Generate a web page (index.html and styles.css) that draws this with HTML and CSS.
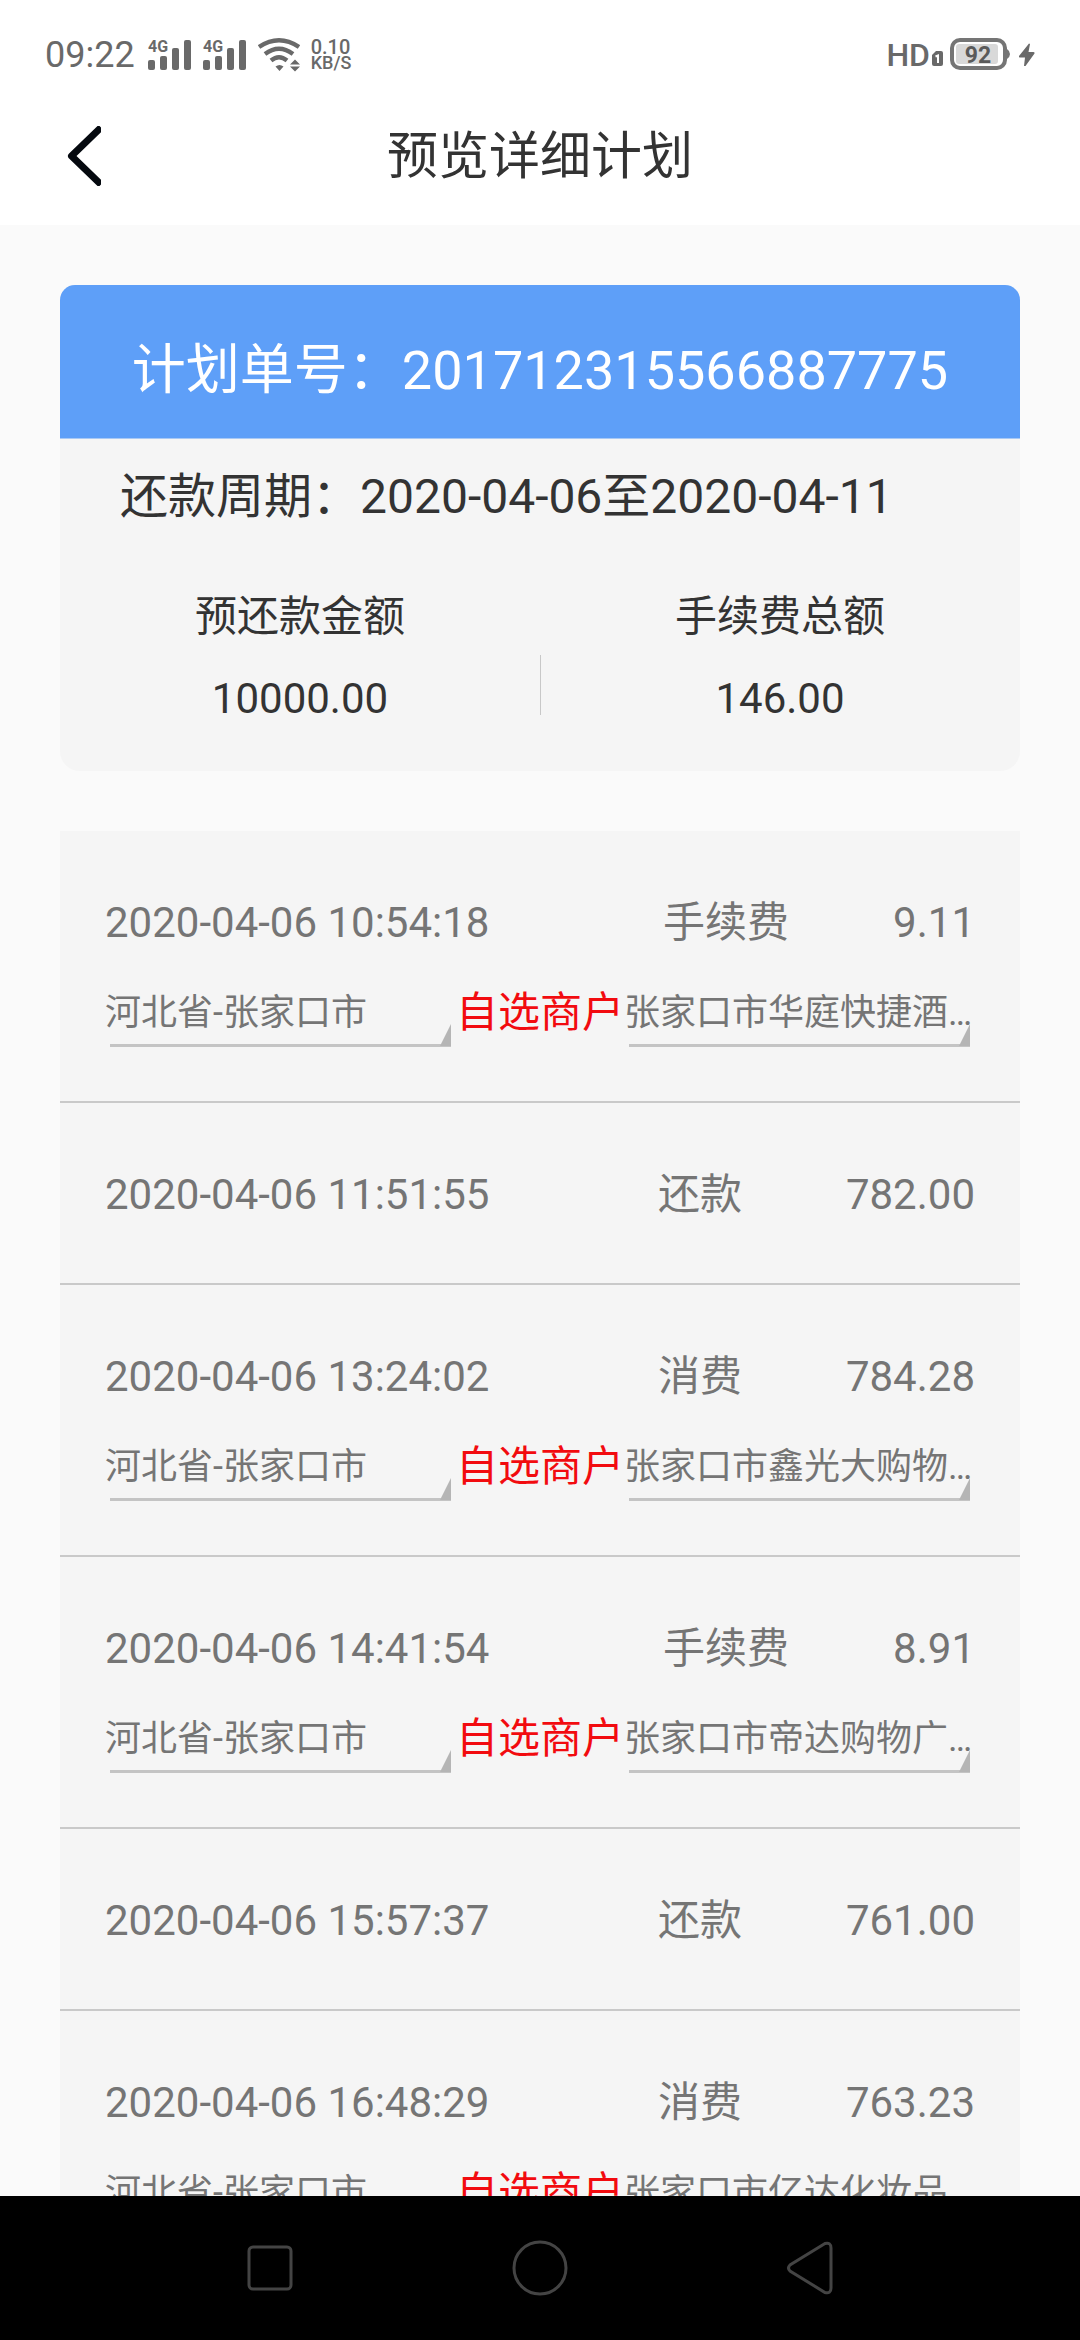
FILE: index.html
```html
<!DOCTYPE html>
<html lang="zh-CN">
<head>
<meta charset="utf-8">
<meta name="viewport" content="width=device-width, initial-scale=1">
<title>预览详细计划</title>
<link rel="stylesheet" href="styles.css">
</head>
<body>
<div class="statusbar">
  <div class="status-group">
    <span class="clock">09:22</span>
    <svg class="signal" width="44" height="32" viewBox="0 0 44 32" aria-hidden="true">
      <text class="signal-label" x="0" y="13">4G</text>
      <rect x="0" y="21" width="7" height="10" rx="2"/><rect x="12" y="17" width="7" height="14" rx="2"/><rect x="24" y="9" width="7" height="22" rx="2"/><rect x="36" y="1" width="7" height="30" rx="2"/>
    </svg>
    <svg class="signal" width="44" height="32" viewBox="0 0 44 32" aria-hidden="true">
      <text class="signal-label" x="0" y="13">4G</text>
      <rect x="0" y="21" width="7" height="10" rx="2"/><rect x="12" y="17" width="7" height="14" rx="2"/><rect x="24" y="9" width="7" height="22" rx="2"/><rect x="36" y="1" width="7" height="30" rx="2"/>
    </svg>
    <svg class="wifi" width="42" height="34" viewBox="0 0 42 34" aria-hidden="true">
      <g fill="none" stroke="currentColor" stroke-width="4.4">
        <path d="M1 9Q21 -4.500 41 9"/>
        <path d="M7 16Q21 5.500 35 16"/>
        <path d="M13 22.500Q21 16 29 22.500"/>
      </g>
      <path fill="currentColor" d="M17.500 28.500Q21.500 25.500 25.500 28.500L21.500 33zM32 26.500L37 21.500L42 26.500zM32 28.500H42L37 33.500z"/>
    </svg>
    <span class="speed"><span class="speed-value">0.10</span><span class="speed-unit">KB/S</span></span>
  </div>
  <div class="status-group">
    <span class="hd">HD</span>
    <svg class="sim" width="12" height="16" viewBox="0 0 12 16" aria-hidden="true">
      <path fill="currentColor" d="M4 0H9Q11 0 11 2V13Q11 15 9 15H2Q0 15 0 13V4z"/>
      <path fill="none" stroke="#fff" stroke-width="2" d="M3.500 5.500L6 4.500V12"/>
    </svg>
    <svg class="battery" width="61" height="34" viewBox="0 0 61 34" role="img" aria-label="92%">
      <rect x="2" y="2" width="53" height="28" rx="8" fill="none" stroke="#757575" stroke-width="4"/>
      <rect x="6" y="6" width="42" height="20" rx="3" fill="#d9d9d9"/>
      <path fill="#757575" d="M57 11Q60 13 60 16T57 21z"/>
      <text class="battery-label" x="28" y="25" text-anchor="middle">92</text>
    </svg>
    <svg class="bolt" width="18" height="24" viewBox="0 0 18 24" aria-hidden="true"><path fill="currentColor" d="M11 0.500L1 13Q0.500 14.500 2 14.500H7L6 23L7.500 23L16.500 10.500Q17 9 15.500 9H10.500L12 1z"/></svg>
  </div>
</div>
<header class="titlebar">
  <button class="back" type="button" aria-label="返回">
    <svg width="34" height="60" viewBox="0 0 34 60" aria-hidden="true"><path d="M34 1.500L4.500 30L34 58.500" fill="none" stroke="#05090f" stroke-width="7" stroke-linejoin="round"/></svg>
  </button>
  <h1 class="title">预览详细计划</h1>
</header>
<main class="content">
  <section class="summary">
    <h2 class="plan-no">计划单号：201712315566887775</h2>
    <p class="period">还款周期：2020-04-06至2020-04-11</p>
    <dl class="totals">
      <div class="total"><dt>预还款金额</dt><dd>10000.00</dd></div>
      <div class="total"><dt>手续费总额</dt><dd>146.00</dd></div>
    </dl>
  </section>
  <ul class="records">
    <li class="record">
      <div class="record-head"><time class="time">2020-04-06 10:54:18</time><span>手续费</span><span>9.11</span></div>
      <div class="record-shop">
        <span class="picker"><select aria-label="地区"><option>河北省-张家口市</option></select></span>
        <label class="shop-label" for="shop1">自选商户</label>
        <span class="picker"><select id="shop1"><option>张家口市华庭快捷酒店</option></select></span>
      </div>
    </li>
    <li class="record">
      <div class="record-head"><time class="time">2020-04-06 11:51:55</time><span>还款</span><span>782.00</span></div>
    </li>
    <li class="record">
      <div class="record-head"><time class="time">2020-04-06 13:24:02</time><span>消费</span><span>784.28</span></div>
      <div class="record-shop">
        <span class="picker"><select aria-label="地区"><option>河北省-张家口市</option></select></span>
        <label class="shop-label" for="shop2">自选商户</label>
        <span class="picker"><select id="shop2"><option>张家口市鑫光大购物中心</option></select></span>
      </div>
    </li>
    <li class="record">
      <div class="record-head"><time class="time">2020-04-06 14:41:54</time><span>手续费</span><span>8.91</span></div>
      <div class="record-shop">
        <span class="picker"><select aria-label="地区"><option>河北省-张家口市</option></select></span>
        <label class="shop-label" for="shop3">自选商户</label>
        <span class="picker"><select id="shop3"><option>张家口市帝达购物广场</option></select></span>
      </div>
    </li>
    <li class="record">
      <div class="record-head"><time class="time">2020-04-06 15:57:37</time><span>还款</span><span>761.00</span></div>
    </li>
    <li class="record">
      <div class="record-head"><time class="time">2020-04-06 16:48:29</time><span>消费</span><span>763.23</span></div>
      <div class="record-shop">
        <span class="picker"><select aria-label="地区"><option>河北省-张家口市</option></select></span>
        <label class="shop-label" for="shop4">自选商户</label>
        <span class="picker"><select id="shop4"><option>张家口市亿达化妆品商店</option></select></span>
      </div>
    </li>
  </ul>
</main>
<nav class="navbar" aria-label="系统导航">
  <button type="button" aria-label="最近任务"><svg width="56" height="56" viewBox="0 0 56 56"><rect x="7" y="7" width="42" height="42" rx="4"/></svg></button>
  <button type="button" aria-label="主屏幕"><svg width="56" height="56" viewBox="0 0 56 56"><circle cx="28" cy="28" r="26"/></svg></button>
  <button type="button" aria-label="返回"><svg width="56" height="56" viewBox="0 0 56 56"><path d="M43 3.500L8 25Q5 28 8 31L43 52.500Q49 54 49 48V8Q49 2 43 3.500z"/></svg></button>
</nav>
</body>
</html>
```
FILE: styles.css
```css
* {
  box-sizing: border-box;
}

body {
  margin: 0;
  height: 100vh;
  display: flex;
  flex-direction: column;
  overflow: hidden;
  background: #fafafa;
  color: #333;
  font-family: Roboto, "Noto Sans CJK SC", sans-serif;
  font-size: 42px;
  line-height: 60px;
}

h1, h2, p, dl, dd, ul {
  margin: 0;
  padding: 0;
  font-weight: 400;
}

button {
  padding: 0;
  border: 0;
  background: none;
}

svg {
  display: block;
}

/* Status bar */
.statusbar {
  flex: none;
  display: flex;
  justify-content: space-between;
  height: 87px;
  padding: 22px 44px 0 45px;
  background: #fff;
  color: #696969;
}

.status-group {
  display: flex;
  align-items: center;
}

.clock {
  margin-right: 13px;
  font-size: 36px;
}

.signal {
  margin-right: 11px;
  overflow: visible;
  fill: currentColor;
}

.signal-label {
  font-size: 16px;
  font-weight: 700;
}

.speed {
  display: flex;
  flex-direction: column;
  margin-left: 11px;
  font-weight: 500;
  line-height: 16px;
}

.speed-value {
  font-size: 20px;
}

.speed-unit {
  font-size: 18px;
}

.hd {
  font-size: 32px;
  font-weight: 500;
}

.sim {
  margin: 8px 6px 0 2px;
}

.battery {
  margin-right: 7px;
}

.battery-label {
  fill: #5a5a5a;
  font-size: 23px;
  font-weight: 700;
}

/* Title bar */
.titlebar {
  flex: none;
  display: grid;
  grid-template-columns: 1fr auto 1fr;
  align-items: center;
  height: 138px;
  padding: 0 67px;
  background: #fff;
}

.back {
  justify-self: start;
}

.title {
  padding-top: 2px;
  font-size: 51px;
}

/* Page content */
.content {
  flex: 1;
  min-height: 0;
  overflow: hidden;
  padding: 60px 60px 0;
}

.summary {
  margin-bottom: 60px;
  overflow: hidden;
  border-radius: 15px 15px 20px 20px;
  background: #f5f5f5;
}

.plan-no {
  padding: 56px 0 37px;
  border-bottom: 1px solid #a9c9f5;
  background: #5e9ff8;
  color: #fff;
  font-size: 54px;
  text-align: center;
}

.period {
  padding: 28px 60px 0;
  font-size: 48px;
}

.totals {
  display: flex;
  padding: 60px 0 42px;
  text-align: center;
}

.total {
  flex: 1;
  display: grid;
  gap: 22px;
}

.total + .total {
  background: linear-gradient(#c8c8c8, #c8c8c8) 0 68px / 1px 60px no-repeat;
}

/* Records */
.records {
  list-style: none;
  background: #f5f5f5;
  color: #757575;
}

.record {
  padding: 62px 45px 58px;
  border-bottom: 2px solid #c9c9c9;
}

.record:has(.record-shop) {
  padding-bottom: 54px;
}

.record-head {
  display: flex;
  gap: 104px;
}

.time {
  margin-right: auto;
}

.record-shop {
  display: flex;
  align-items: center;
  margin-top: 28px;
}

.shop-label {
  padding-bottom: 2px;
  color: #f20b0f;
}

/* Drop-down with an underline and a corner triangle */
.picker {
  flex: 1;
  min-width: 0;
  position: relative;
}

.picker select {
  appearance: none;
  display: block;
  width: 100%;
  height: 66px;
  padding: 0 0 2px;
  border: 0;
  border-radius: 0;
  outline: 0;
  background: linear-gradient(#c4c4c4, #c4c4c4) 5px 100% / calc(100% - 10px) 3px no-repeat;
  color: inherit;
  font: inherit;
  font-size: 36px;
  text-overflow: ellipsis;
}

.picker::after {
  content: "";
  position: absolute;
  right: 5px;
  bottom: 1px;
  width: 11px;
  height: 22px;
  background: #b5b5b5;
  clip-path: polygon(100% 0, 100% 100%, 0 100%);
  pointer-events: none;
}

/* System navigation */
.navbar {
  flex: none;
  display: grid;
  grid-template-columns: repeat(3, 1fr);
  justify-items: center;
  align-items: center;
  height: 144px;
  padding: 0 12.5%;
  background: #000;
}

.navbar svg {
  fill: none;
  stroke: #444;
  stroke-width: 3;
}
```
